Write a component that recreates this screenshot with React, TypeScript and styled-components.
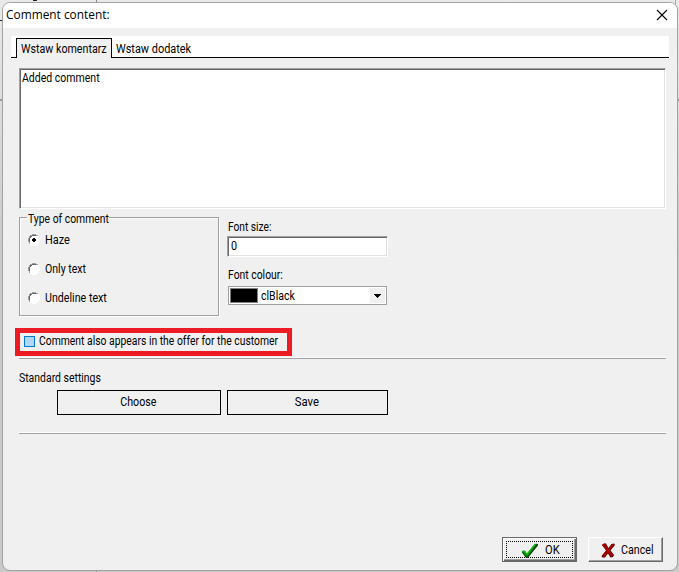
import React from "react";
import styled, { createGlobalStyle } from "styled-components";

const Global = createGlobalStyle`
  *{box-sizing:border-box}
  html,body{margin:0;height:100%;overflow:hidden}
  body{background:#e9e9e9;font:12px/16px Roboto,"Liberation Sans",sans-serif;color:#000}
`;

const Desktop = styled.div`
  width:679px;height:572px;padding:2px 1px 1px 2px;overflow:hidden;
  background:
    linear-gradient(#222,#222) 33px 0/4px 1px no-repeat,
    linear-gradient(#222,#222) 0 20px/2px 1px no-repeat,
    linear-gradient(#888,#888) 96px 0/1px 100% no-repeat,
    linear-gradient(#aaa,#aaa) 675px 0/1px 5px no-repeat,
    linear-gradient(#999,#999) 0 99px/100% 2px no-repeat,
    linear-gradient(#e9e9e9,#c9c9c9 45%);
`;
const Dialog = styled.div`
  width:676px;height:569px;border:1px solid #a3a3a3;border-radius:8px;overflow:hidden;
  background:#f0f0f0;display:flex;flex-direction:column;
`;
const TitleBar = styled.header`
  height:25px;flex:none;background:#fff;display:flex;justify-content:space-between;align-items:center;
  padding:0 9px 1px 3px;font:12px/22px "Open Sans","Noto Sans",sans-serif;
`;
/* Narrow label face: $fit condenses the glyphs horizontally. */
const Text = styled.span<{ $fit?: number; $center?: boolean }>`
  display:inline-block;white-space:nowrap;
  transform:scaleX(${(p) => p.$fit ?? 1});
  transform-origin:${(p) => (p.$center ? "center" : "left")};
`;
const Tabs = styled.nav`
  margin:8px 8px 0;height:22px;flex:none;background:#fff;display:flex;align-items:flex-end;
  box-shadow:inset 0 -1px #000;padding-left:5px;
`;
const Tab = styled.div<{ $active?: boolean }>`
  height:20px;padding:3px 4px 0;
  ${(p) => p.$active && "width:96px;padding-top:2px;border:1px solid #000;border-bottom:0;background:#f0f0f0;"}
`;
const Body = styled.main`
  padding:10px 11px 0 16px;display:flex;flex-direction:column;
`;
const Sunken = styled.div`
  background:#fff;border:1px solid;border-color:#a0a0a0 #fff #fff #a0a0a0;
  box-shadow:inset 1px 1px #696969,inset -1px -1px #e3e3e3;padding:1px 2px 0;
`;
const Memo = styled(Sunken)`height:141px;`;
const Options = styled.section`display:flex;margin-top:8px;height:99px;`;
const Group = styled.div`
  width:200px;height:99px;margin-right:8px;padding-left:8px;flex:none;
  border:1px solid #a0a0a0;box-shadow:1px 1px #fff,inset 1px 1px #fff;
`;
const Legend = styled.div`
  width:82px;height:16px;margin-top:-7px;margin-left:-1px;background:#f0f0f0;padding-left:1px;
`;
const Choice = styled.label`
  display:flex;align-items:center;gap:5px;height:16px;margin-top:5px;
  & + &{margin-top:13px}
`;
const Fields = styled.div`padding-top:2px;width:161px;`;
const Input = styled(Sunken)`height:21px;margin-top:1px;padding-left:3px;`;
const FieldLabel = styled.div<{ $top?: number }>`
  height:16px;margin-top:${(p) => p.$top ?? 0}px;padding-left:1px;
`;
const Combo = styled.div`
  margin:3px 1px 0;width:159px;height:19px;border:1px solid #a0a0a0;background:#fff;
  padding:1px;display:flex;align-items:center;
`;
const Swatch = styled.i`width:28px;height:15px;flex:none;background:#000;border:1px solid #808080;margin-right:3px;`;
const Arrow = styled.span`
  width:15px;height:15px;margin-left:auto;background:#f0f0f0;display:flex;align-items:center;justify-content:center;
`;
const Highlight = styled.label`
  margin:12px 0 0 -4px;width:277px;height:28px;border:5px solid #ed1c24;
  display:flex;align-items:center;padding:0 0 2px 4px;
`;
const Check = styled.i`width:11px;height:11px;flex:none;background:#b3d6f5;border:1px solid #0078d7;margin-right:4px;`;
const Rule = styled.div<{ $top: number }>`
  height:2px;margin-top:${(p) => p.$top}px;background:#a0a0a0;border-top:1px solid #fff;
`;
const Section = styled.div`height:16px;margin-top:11px;`;
const Presets = styled.div`display:flex;gap:6px;margin:4px 0 0 38px;`;
const FlatButton = styled.button<{ $w: number }>`
  width:${(p) => p.$w}px;height:25px;padding:0 1px 2px 0;border:1px solid #000;background:#f0f0f0;font:inherit;color:#000;
`;
const Footer = styled.footer`
  margin-top:auto;padding:0 14px 8px 0;display:flex;justify-content:flex-end;gap:11px;
`;
const PushButton = styled.button<{ $focus?: boolean }>`
  width:75px;height:25px;padding:0 0 0 12px;background:#f0f0f0;font:inherit;color:#000;
  display:flex;align-items:center;gap:6px;
  border:1px solid;border-color:#fff #696969 #696969 #fff;box-shadow:inset -1px -1px #a0a0a0;
  ${(p) => p.$focus && "padding-left:18px;border-color:#696969;box-shadow:inset 1px 1px #fff,inset -1px -1px #696969,inset -2px -2px #a0a0a0;outline:1px dotted #000;outline-offset:-5px;"}
`;

const Radio = ({ on }: { on?: boolean }) => (
  <svg width="12" height="12" viewBox="0 0 12 12" shapeRendering="crispEdges">
    <path d="M4 1h4v1h2v2h1v4h-1v2H8v1H4v-1H2V8H1V4h1V2h2z" fill="#fff" />
    <path d="M4 0h4v1h2v1H8V1H4v1H2v2H1v4h1v2H1V8H0V4h1V2h1V1h2z" fill="#a0a0a0" />
    <path d="M4 1h4v1H4zM2 2h2v1H3v1H2zM1 4h1v4H1z" fill="#696969" />
    <path d="M10 2h1v2h1v4h-1v2h-1v1H8v1H4v-1H2v-1h2v1h4v-1h2V8h1V4h-1z" fill="#fff" />
    {on && <path d="M5 4h2v1h1v2H7v1H5V7H4V5h1z" fill="#000" />}
  </svg>
);

const CloseIcon = () => (
  <svg width="12" height="12" viewBox="0 0 12 12">
    <path d="M1 1l10 10M11 1L1 11" stroke="#000" strokeWidth="1.1" />
  </svg>
);

const CheckIcon = () => (
  <svg width="18" height="16" viewBox="0 0 18 16">
    <path d="M1 9.5h3l2 2.5L14 2h3v1.5L8 14.5 6.5 16H5L1 10.5z" fill="#003c00" />
    <path d="M1 9l2.5-.7L6 11.2 13.5 2l2.7-.6L6.4 14.4H5z" fill="#00a000" />
    <path d="M2 9l1.2-.2L6 12l8-10" stroke="#38cf38" strokeWidth=".7" fill="none" />
  </svg>
);

const CrossIcon = () => (
  <svg width="14" height="16" viewBox="0 0 14 16">
    <path d="M1 3l2-1.5h2L7.5 6l3-4 2.5-.5 1 1.5L9.5 8.5 13 13l-1 2-2.5.5L7 11.5 4 15.5H1.5L.5 14 5 8.5z" fill="#500000" />
    <path d="M1 2.5l2.5-1L7.3 7l3.5-5h2L8.7 8.3l3.6 5-2.1 1.2-3.4-4.3L3.3 15 1 14l4.6-5.7z" fill="#b00000" />
  </svg>
);

export default function App() {
  return (
    <Desktop>
      <Global />
      <Dialog>
        <TitleBar>
          <Text $fit={0.99}>Comment content:</Text>
          <CloseIcon />
        </TitleBar>
        <Tabs>
          <Tab $active><Text $fit={0.89}>Wstaw komentarz</Text></Tab>
          <Tab><Text $fit={0.91}>Wstaw dodatek</Text></Tab>
        </Tabs>
        <Body>
          <Memo><Text $fit={0.876}>Added comment</Text></Memo>
          <Options>
            <Group>
              <Legend><Text $fit={0.865}>Type of comment</Text></Legend>
              <Choice><Radio on /><Text $fit={0.91}>Haze</Text></Choice>
              <Choice><Radio /><Text $fit={0.88}>Only text</Text></Choice>
              <Choice><Radio /><Text $fit={0.89}>Undeline text</Text></Choice>
            </Group>
            <Fields>
              <FieldLabel><Text $fit={0.85}>Font size:</Text></FieldLabel>
              <Input><Text $fit={0.9}>0</Text></Input>
              <FieldLabel $top={10}><Text $fit={0.865}>Font colour:</Text></FieldLabel>
              <Combo>
                <Swatch />
                <Text $fit={0.88}>clBlack</Text>
                <Arrow>
                  <svg width="7" height="4" shapeRendering="crispEdges">
                    <path d="M0 0h7v1H6v1H5v1H4v1H3V3H2V2H1V1H0z" />
                  </svg>
                </Arrow>
              </Combo>
            </Fields>
          </Options>
          <Highlight>
            <Check />
            <Text $fit={0.864}>Comment also appears in the offer for the customer</Text>
          </Highlight>
          <Rule $top={1} />
          <Section><Text $fit={0.87}>Standard settings</Text></Section>
          <Presets>
            <FlatButton $w={164}><Text $center $fit={0.89}>Choose</Text></FlatButton>
            <FlatButton $w={161}><Text $center $fit={0.94}>Save</Text></FlatButton>
          </Presets>
          <Rule $top={17} />
        </Body>
        <Footer>
          <PushButton $focus>
            <CheckIcon />
            <Text $fit={0.93}>OK</Text>
          </PushButton>
          <PushButton>
            <CrossIcon />
            <Text $fit={0.89}>Cancel</Text>
          </PushButton>
        </Footer>
      </Dialog>
    </Desktop>
  );
}
